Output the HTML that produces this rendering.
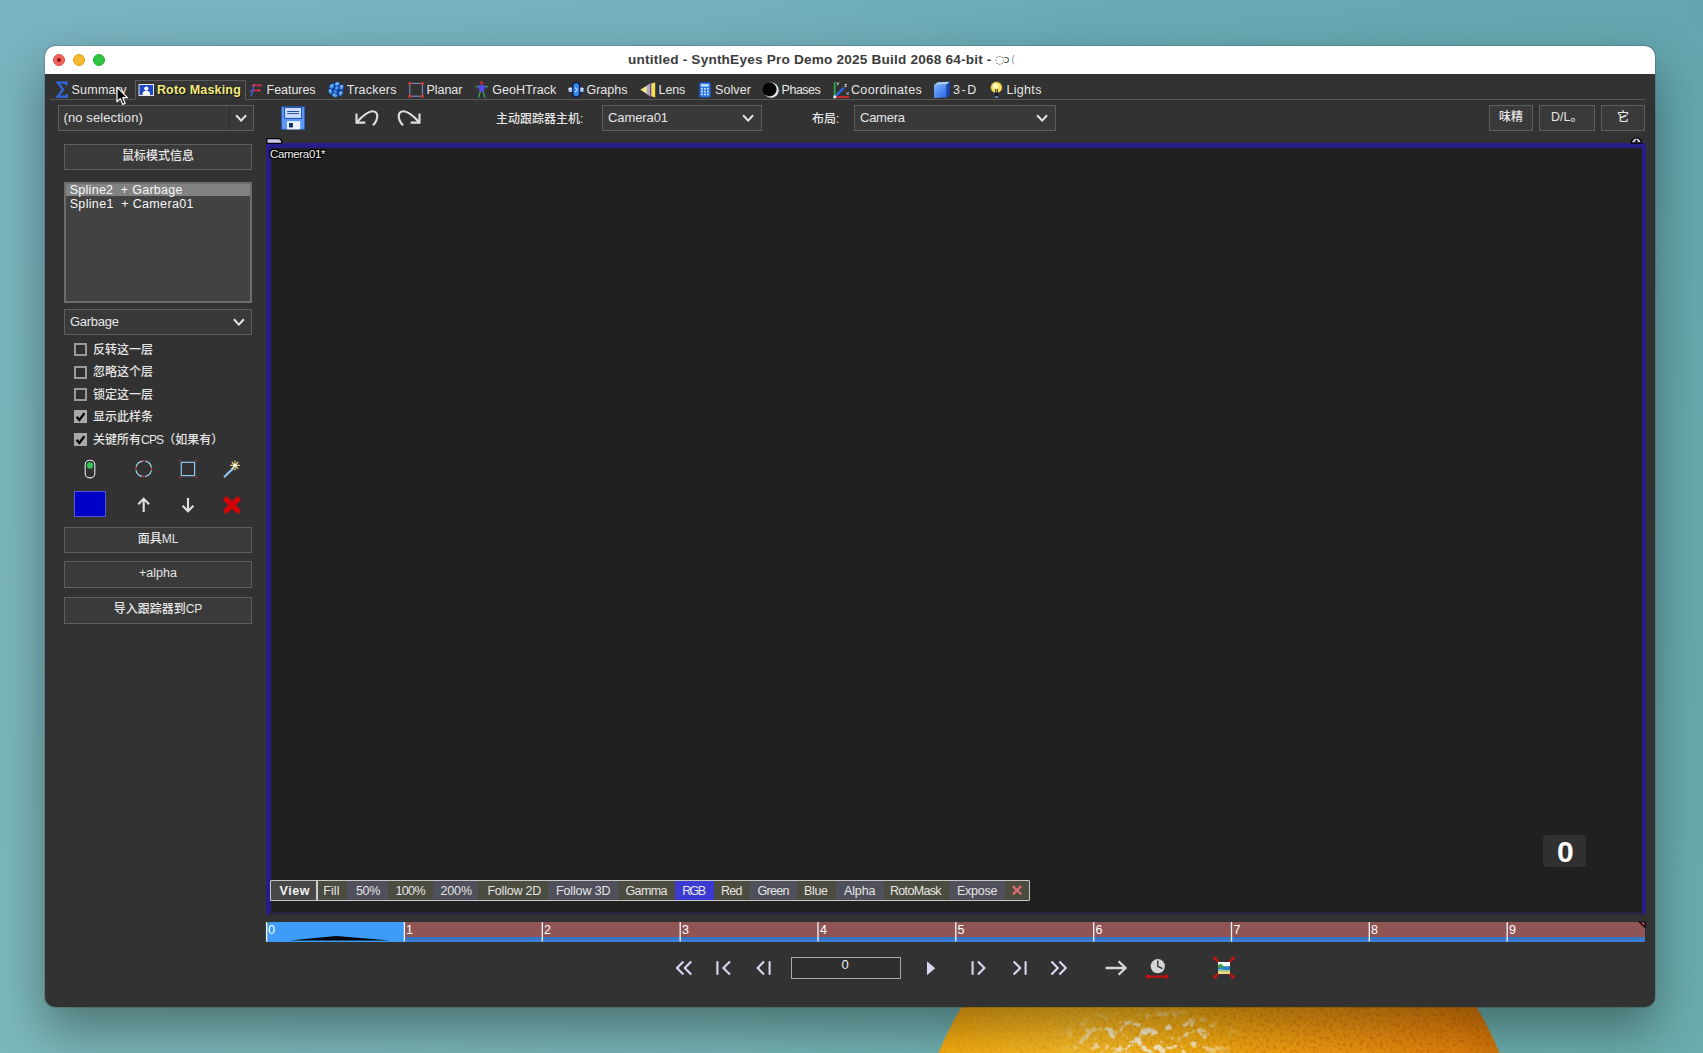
<!DOCTYPE html>
<html lang="zh">
<head>
<meta charset="utf-8">
<title>untitled - SynthEyes Pro Demo 2025 Build 2068 64-bit</title>
<style>
html,body{margin:0;padding:0;}
body{width:1703px;height:1053px;overflow:hidden;position:relative;background:#77b1be;
 font-family:"Liberation Sans","Noto Sans CJK SC",sans-serif;font-size:12.5px;color:#e6e6e6;}
.abs{position:absolute;}
#bg{left:0;top:0;width:1703px;height:1053px;}
#win{left:45px;top:46px;width:1610px;height:961px;border-radius:10px;background:#323232;
 box-shadow:0 22px 50px rgba(0,0,0,.38),0 0 0 1px rgba(0,0,0,.12);overflow:hidden;}
#in{left:-45px;top:-46px;width:1703px;height:1053px;}
#title{left:45px;top:46px;width:1610px;height:28px;background:#ffffff;}
.tl{position:absolute;top:54px;width:12px;height:12px;border-radius:50%;box-sizing:border-box;}
.lbl{position:absolute;white-space:nowrap;}
.box{position:absolute;box-sizing:border-box;border:1px solid #5e5e5e;background:#393939;}
.btn{font-weight:500;position:absolute;box-sizing:border-box;border:1px solid #5e5e5e;background:#3a3a3a;text-align:center;white-space:nowrap;font-size:12px;color:#e6e6e6;}
.cb{position:absolute;left:74px;width:13px;height:13px;box-sizing:border-box;border:2px solid #9a9a9a;background:#303030;}
.cb.on{background:#a9a9a9;border-color:#a9a9a9;}
.cbl{font-weight:500;position:absolute;left:93px;font-size:12px;line-height:16px;white-space:nowrap;color:#e6e6e6;}
svg{position:absolute;overflow:visible;}
.vc{position:absolute;top:880.5px;height:19px;}
</style>
</head>
<body>
<svg id="bg" width="1703" height="1053" viewBox="0 0 1703 1053">
 <defs>
  <linearGradient id="g1" x1="0" y1="0" x2="1" y2="0">
   <stop offset="0" stop-color="#79b4c0"/><stop offset="0.4" stop-color="#75b1bd"/><stop offset="0.62" stop-color="#69abb5"/><stop offset="1" stop-color="#63a6af"/>
  </linearGradient>
  <linearGradient id="g2" x1="0" y1="0" x2="0" y2="1">
   <stop offset="0" stop-color="#8bcea2" stop-opacity="0"/><stop offset="1" stop-color="#86c89e" stop-opacity=".2"/>
  </linearGradient>
  <radialGradient id="og" cx="1080" cy="1060" r="440" gradientUnits="userSpaceOnUse">
   <stop offset="0" stop-color="#fdc12a"/><stop offset="0.3" stop-color="#f9b012"/><stop offset="0.6" stop-color="#f39912"/><stop offset="0.85" stop-color="#e6860c"/><stop offset="1" stop-color="#cf7208"/>
  </radialGradient>
  <linearGradient id="dmg" x1="940" y1="0" x2="1500" y2="0" gradientUnits="userSpaceOnUse"><stop offset="0" stop-color="#fff" stop-opacity=".15"/><stop offset=".45" stop-color="#fff" stop-opacity=".5"/><stop offset="1" stop-color="#fff" stop-opacity="1"/></linearGradient>
  <mask id="dmk"><rect x="900" y="990" width="640" height="70" fill="url(#dmg)"/></mask>
  <clipPath id="oc"><circle cx="1219" cy="1165" r="302"/></clipPath>
  <filter id="dim" x="0" y="0" width="100%" height="100%" color-interpolation-filters="sRGB">
   <feTurbulence type="fractalNoise" baseFrequency="0.3" numOctaves="1" seed="7" result="n"/>
   <feColorMatrix in="n" type="matrix" values="0 0 0 0 0.80  0 0 0 0 0.38  0 0 0 0 0.02  5 0 0 0 -2.45"/>
  </filter>
  <filter id="spk" x="0" y="0" width="100%" height="100%" color-interpolation-filters="sRGB">
   <feTurbulence type="fractalNoise" baseFrequency="0.11" numOctaves="3" seed="11" result="n"/>
   <feColorMatrix in="n" type="matrix" values="0 0 0 0 1  0 0 0 0 0.97  0 0 0 0 0.86  7 0 0 0 -3.75"/>
  </filter>
  <radialGradient id="hm" cx="1150" cy="1040" r="1" gradientUnits="userSpaceOnUse" gradientTransform="translate(1150 1040) scale(95 34) translate(-1150 -1040)">
   <stop offset="0" stop-color="#fff"/><stop offset=".55" stop-color="#fff" stop-opacity=".8"/><stop offset="1" stop-color="#fff" stop-opacity="0"/>
  </radialGradient>
  <mask id="hmk"><rect x="900" y="990" width="700" height="70" fill="#000"/><ellipse cx="1150" cy="1040" rx="95" ry="34" fill="url(#hm)"/></mask>
 </defs>
 <rect width="1703" height="1053" fill="url(#g1)"/>
 <rect width="1703" height="1053" fill="url(#g2)"/>
 <g clip-path="url(#oc)">
  <rect x="900" y="990" width="640" height="70" fill="url(#og)"/>
  <g mask="url(#dmk)"><rect x="900" y="990" width="640" height="70" filter="url(#dim)" opacity=".5"/></g>
  <g mask="url(#hmk)"><rect x="900" y="990" width="640" height="70" filter="url(#spk)"/></g>
 </g>
</svg>
<div id="win" class="abs"><div id="in" class="abs">
 <div id="title" class="abs"></div>
 <div class="tl" style="left:53px;background:#f2655c;border:.5px solid #dd4a42;"></div>
 <div class="tl" style="left:57px;top:58px;width:4px;height:4px;background:#8c0a06;border:0;"></div>
 <div class="tl" style="left:73px;background:#f6b82e;border:.5px solid #dea123;"></div>
 <div class="tl" style="left:93px;background:#2ec341;border:.5px solid #23ab34;"></div>
 <span class="lbl" style="left:995px;top:52px;font-family:'DejaVu Sans',sans-serif;font-size:11px;line-height:16px;color:#444;letter-spacing:-1px">&#9676;&#8580;&#8201;<span style="color:#999">&#8201;(</span></span>
 <!-- tab strip -->
 <div class="abs" style="left:50px;top:99px;width:1595px;height:1px;background:#585858;"></div>
 <div class="abs" style="left:135px;top:80px;width:111px;height:20px;box-sizing:border-box;border:1px solid #5a5a5a;border-bottom:1px solid #323232;background:#353535;"></div>
 <svg width="1703" height="110" style="left:0;top:0" viewBox="0 0 1703 110">
  <!-- sigma -->
  <path d="M66.5 85.4V82.7H57.8l5.3 6.9L57.6 96.6h9.1V93.9" fill="none" stroke="#2f68dc" stroke-width="2.3" stroke-linejoin="miter"/>
  <!-- roto -->
  <rect x="139" y="84.5" width="14.5" height="11" fill="#1d48c8" stroke="#e8e8f4" stroke-width="1"/>
  <circle cx="146.3" cy="88.6" r="2.1" fill="#fff"/><path d="M142.6 95v-1.6c0-1.7 1.6-2.6 3.7-2.6s3.7.9 3.7 2.6V95z" fill="#fff"/>
  <!-- features -->
  <path d="M251.2 96.4L253.9 84" stroke="#3f5fd0" stroke-width="1.5" fill="none"/>
  <path d="M249.6 90.6h4.4" stroke="#3f5fd0" stroke-width="1.2" fill="none"/>
  <path d="M253.2 85.4H262M253 90.4H260" stroke="#cc2c4c" stroke-width="1.7" fill="none"/>
  <circle cx="253.8" cy="85.2" r="1.2" fill="#d83a5a"/><circle cx="259.2" cy="90.4" r="1.2" fill="#d83a5a"/>
  <!-- trackers -->
  <circle cx="336" cy="89.6" r="7.4" fill="#113f98"/>
  <g fill="#4a98f0">
   <ellipse cx="331.8" cy="86.2" rx="2.6" ry="1.9" transform="rotate(-40 331.8 86.2)"/><ellipse cx="337.2" cy="83.9" rx="2.5" ry="1.8" transform="rotate(-20 337.2 83.9)"/>
   <ellipse cx="341.6" cy="87.2" rx="1.8" ry="2.5" transform="rotate(20 341.6 87.2)"/><ellipse cx="340.8" cy="93.4" rx="2.4" ry="1.8" transform="rotate(-50 340.8 93.4)"/>
   <ellipse cx="334.8" cy="95.2" rx="2.6" ry="1.8" transform="rotate(15 334.8 95.2)"/><ellipse cx="330.4" cy="91.4" rx="1.8" ry="2.4" transform="rotate(-10 330.4 91.4)"/>
   <ellipse cx="336.8" cy="88" rx="2" ry="1.5" transform="rotate(-30 336.8 88)"/><ellipse cx="335.4" cy="91.6" rx="1.8" ry="1.3" transform="rotate(20 335.4 91.6)"/>
  </g>
  <g fill="#cfe4ff"><circle cx="331.2" cy="85.6" r=".7"/><circle cx="336.6" cy="83.4" r=".7"/><circle cx="341.2" cy="86.2" r=".7"/><circle cx="340.2" cy="92.8" r=".7"/><circle cx="334" cy="94.8" r=".7"/><circle cx="330" cy="90.4" r=".7"/></g>
  <!-- planar -->
  <rect x="409.8" y="83.4" width="12.6" height="12.8" fill="none" stroke="#8394d6" stroke-width="1"/>
  <g fill="#cc3434"><circle cx="409.8" cy="83.4" r="1.7"/><circle cx="422.4" cy="83.4" r="1.7"/><circle cx="409.8" cy="96.2" r="1.7"/><circle cx="422.4" cy="96.2" r="1.7"/></g>
  <!-- geohtrack -->
  <path d="M475.4 86.6h12.8" stroke="#35a862" stroke-width="1.1"/>
  <path d="M480.4 91l-1.8 6.6M483 91l1.8 6.6" stroke="#3aa85a" stroke-width="1.3" fill="none"/>
  <path d="M477.8 85.2h7.8l-2.2 6.8h-3.4z" fill="#5648ea"/>
  <circle cx="481.7" cy="83" r="1.7" fill="#c4263a"/>
  <!-- graphs -->
  <rect x="568.4" y="87.8" width="15.2" height="4.2" rx="1" fill="#9cc0f4"/>
  <rect x="568.4" y="87.8" width="15.2" height="1.6" rx=".8" fill="#d4e4fb"/>
  <rect x="572.8" y="82.6" width="6.8" height="14.2" rx="3.2" fill="#348af2" stroke="#06194a" stroke-width="1.3"/>
  <path d="M574.9 87.5l2.6 2.3-2.6 2.3" fill="none" stroke="#e8f0ff" stroke-width="1"/>
  <!-- lens -->
  <path d="M640.3 89.8L650.4 83.4v12.8z" fill="#ece488"/>
  <path d="M647 85.6l3.4-2.2v12.8l-3.4-2.2z" fill="#aaa2d2"/>
  <path d="M650.6 82.6v14.6" stroke="#7a2fb0" stroke-width="1"/>
  <path d="M651.2 83.6l4-1.2v15l-4-1.2z" fill="#f0e24a"/>
  <!-- solver -->
  <rect x="699.5" y="82.6" width="10.8" height="14.6" rx="1" fill="#2e78ea" stroke="#1a4fb0" stroke-width=".8"/>
  <rect x="701" y="84" width="7.8" height="2.6" fill="#bcd8fa"/>
  <g fill="#cfe2fb"><rect x="701" y="88" width="1.8" height="1.6"/><rect x="704" y="88" width="1.8" height="1.6"/><rect x="707" y="88" width="1.8" height="1.6"/>
   <rect x="701" y="90.8" width="1.8" height="1.6"/><rect x="704" y="90.8" width="1.8" height="1.6"/><rect x="707" y="90.8" width="1.8" height="1.6"/>
   <rect x="701" y="93.6" width="1.8" height="1.6"/><rect x="704" y="93.6" width="1.8" height="1.6"/><rect x="707" y="93.6" width="1.8" height="1.6"/></g>
  <!-- phases -->
  <circle cx="771.2" cy="90.2" r="7.6" fill="#e8e8e8"/>
  <circle cx="769.6" cy="89.4" r="7" fill="#050505"/>
  <!-- coordinates -->
  <path d="M834.7 82.2v14" stroke="#2f9e4c" stroke-width="2"/>
  <path d="M835 97h14" stroke="#c42a2a" stroke-width="2.2"/>
  <path d="M836 95.6L843.6 88" stroke="#2a66d4" stroke-width="2.6"/>
  <rect x="833.4" y="95.6" width="2.7" height="2.7" fill="#fff"/>
  <path d="M836.6 82.4l1.2 1.5 1.2-1.5M837.8 83.9v1.5M844.6 84.4h2l-2 2.2h2M846.6 92.4l2.2 2.2M848.8 92.4l-2.2 2.2" stroke="#f4f4f4" stroke-width=".8" fill="none"/>
  <!-- 3-D -->
  <defs><linearGradient id="cb" x1="0" y1="0" x2="1" y2="1"><stop offset="0" stop-color="#7eb2fb"/><stop offset="1" stop-color="#2866e6"/></linearGradient></defs>
  <path d="M934 85l12.6-.4v13l-12.6.4z" fill="url(#cb)"/>
  <path d="M934 85l3.6-2.8 12.4-.4-3.4 2.8z" fill="#a8ccfc"/>
  <path d="M946.6 84.6l3.4-2.8v12.6l-3.4 3.2z" fill="#1646b0"/>
  <!-- lights -->
  <circle cx="996.4" cy="87.4" r="5.5" fill="#f4e368" stroke="#c4aa28" stroke-width=".7"/>
  <circle cx="995.6" cy="86" r="2.6" fill="#fff9c4"/>
  <path d="M995.6 89v5M997.4 89v5" stroke="#1a1a1a" stroke-width=".9"/>
  <rect x="994.9" y="92.4" width="3.2" height="4.2" fill="#161c3a"/>
  <rect x="994.9" y="96.4" width="3.2" height="1.2" fill="#8ab4f0"/>
 </svg>

 <!-- toolbar -->
 <div class="box" style="left:58px;top:105px;width:196px;height:26px;"></div>
 <div class="abs" style="left:229px;top:106px;width:1px;height:24px;background:#2c2c2c;"></div>
 <div class="box" style="left:602px;top:105px;width:160px;height:26px;"></div>
 <div class="box" style="left:854px;top:105px;width:202px;height:26px;"></div>
 <div class="btn" style="left:1489px;top:105px;width:44px;height:26px;line-height:22px;">味精</div>
 <div class="btn" style="left:1539px;top:105px;width:56px;height:26px;line-height:22px;font-size:12.5px;">D/L。</div>
 <div class="btn" style="left:1601px;top:105px;width:44px;height:26px;line-height:22px;">它</div>
 <svg width="1703" height="140" style="left:0;top:0" viewBox="0 0 1703 140">
  <g fill="none" stroke="#e6e6e6" stroke-width="2" stroke-linecap="square" stroke-linejoin="miter">
   <path d="M236.8 116l4.3 4.6 4.3-4.6"/><path d="M743.8 116l4.3 4.6 4.3-4.6"/><path d="M1037.8 116l4.3 4.6 4.3-4.6"/>
  </g>
  <!-- save -->
  <path d="M281.6 106.8h23v22.6h-23z" fill="#5a9af4" stroke="#2458c0" stroke-width=".7"/>
  <rect x="284.6" y="107.4" width="17" height="11" fill="#ccdcfc" stroke="#1f4eae" stroke-width="1"/>
  <path d="M287.2 111.5h11.8M287.2 113.6h11.8" stroke="#2a4f9c" stroke-width="1"/>
  <rect x="287" y="121.2" width="13.2" height="8.2" fill="#eef2fc"/>
  <rect x="289" y="123" width="3.9" height="4.4" fill="#0c2a6a"/>
  <!-- undo / redo -->
  <g fill="none" stroke="#e0e0e0" stroke-width="2.1" stroke-linecap="butt" stroke-linejoin="miter">
   <path d="M357 122C361.5 117 367 111.6 372.4 111.2C378.6 110.9 379 119 373 125.4"/><path d="M356.5 113.4V122.6H365.2"/>
   <path d="M419 122C414.5 117 409 111.6 403.6 111.2C397.4 110.9 397 119 403 125.4"/><path d="M419.5 113.4V122.6H410.8"/>
  </g>
 </svg>
 <!-- left panel -->
 <div class="btn" style="left:64px;top:144px;width:188px;height:26px;line-height:23px;">鼠标模式信息</div>
 <div class="abs" style="left:64px;top:182px;width:188px;height:121px;box-sizing:border-box;border:2px solid #6c6c6c;background:#424242;"></div>
 <div class="abs" style="left:66px;top:184px;width:184px;height:12px;background:#828282;"></div>
 <div class="box" style="left:64px;top:309px;width:188px;height:26px;"></div>
 <svg width="300" height="30" style="left:0;top:309px" viewBox="0 309 300 30"><path d="M234.6 320l4.3 4.6 4.3-4.6" fill="none" stroke="#e6e6e6" stroke-width="2" stroke-linecap="square"/></svg>
 <div class="cb" style="top:343px"></div><div class="cbl" style="top:341.5px">反转这一层</div>
 <div class="cb" style="top:365.5px"></div><div class="cbl" style="top:364px">忽略这个层</div>
 <div class="cb" style="top:388px"></div><div class="cbl" style="top:386.5px">锁定这一层</div>
 <div class="cb on" style="top:410px"></div><div class="cbl" style="top:408.5px">显示此样条</div>
 <div class="cb on" style="top:433px"></div><div class="cbl" style="top:431.5px">关键所有<span style="letter-spacing:-.8px">CPS</span>（如果有）</div>
 <svg width="300" height="110" style="left:0;top:420px" viewBox="0 420 300 110">
  <path d="M76.6 417.5l2.8 3 5-6.6M76.6 440.5l2.8 3 5-6.6" transform="translate(0,-.6)" fill="none" stroke="#0a0a0a" stroke-width="2.4"/>
  <!-- toggle -->
  <rect x="85.2" y="460.3" width="9.6" height="17.6" rx="4.4" fill="none" stroke="#e6e6e6" stroke-width="1.1"/>
  <circle cx="90" cy="465.4" r="3.1" fill="#2fc757"/>
  <!-- circle -->
  <circle cx="143.7" cy="468.8" r="7.8" fill="none" stroke="#9fd2f2" stroke-width="1.2" stroke-dasharray="9.25 3" stroke-dashoffset="-1.5"/>
  <g fill="#e02855"><circle cx="143.7" cy="461" r="1"/><circle cx="143.7" cy="476.6" r="1"/><circle cx="135.9" cy="468.8" r="1"/><circle cx="151.5" cy="468.8" r="1"/></g>
  <!-- square -->
  <rect x="181.3" y="462.3" width="13.3" height="13.3" fill="none" stroke="#8ec6f2" stroke-width="1.2"/>
  <g fill="#d02a2a"><circle cx="179.7" cy="460.6" r=".9"/><circle cx="196.2" cy="460.6" r=".9"/><circle cx="179.7" cy="477.3" r=".9"/><circle cx="196.2" cy="477.3" r=".9"/></g>
  <!-- wand -->
  <path d="M224 477.3l9.6-9.4" stroke="#8cc0f0" stroke-width="2.2" fill="none"/>
  <path d="M235 460.6v9.6M230.3 465.4h9.4M231.7 462l6.6 6.8M238.3 462l-6.6 6.8" stroke="#f6e08a" stroke-width="1.1" fill="none"/>
  <circle cx="235" cy="465.4" r="1.5" fill="#fff"/>
  <!-- swatch -->
  <rect x="74.5" y="491.5" width="31" height="25" fill="#0000c6" stroke="#5656d2" stroke-width="1"/>
  <!-- arrows -->
  <g fill="none" stroke="#e0e0e0" stroke-width="2.1"><path d="M143.7 512v-13M138.3 504.2l5.4-5.4 5.4 5.4"/><path d="M188 498v13M182.6 505.8l5.4 5.4 5.4-5.4"/></g>
  <path d="M226.3 499.3l11.4 11.4M237.7 499.3l-11.4 11.4" stroke="#d20404" stroke-width="5.4" stroke-linecap="round" fill="none"/>
 </svg>
 <div class="btn" style="left:64px;top:527px;width:188px;height:26px;line-height:23px;">面具ML</div>
 <div class="btn" style="left:64px;top:561px;width:188px;height:27px;line-height:22px;font-size:12.5px;">+alpha</div>
 <div class="btn" style="left:64px;top:597px;width:188px;height:27px;line-height:22.5px;">导入跟踪器到CP</div>
 <!-- viewport -->
 <div class="abs" style="left:266px;top:143px;width:1380px;height:772px;box-sizing:border-box;background:#202020;border-left:5px solid #271d89;border-top:5px solid #271d89;border-right:4px solid #271d89;border-bottom:3px solid #292740;"></div>
 <svg width="1703" height="20" style="left:0;top:130px" viewBox="0 130 1703 20">
  <path d="M266.9 143.4v-4.7h11c2.6 0 4 2 4 4.7z" fill="#c9c9ee" stroke="#000" stroke-width="1.2"/>
  <path d="M1631.3 143a5.1 5.1 0 0 1 10.2 0z" fill="#d4d4ee" stroke="#000" stroke-width="1.4"/>
  <path d="M1636.4 139.6v3.4M1634.6 141.3h3.6" stroke="#000" stroke-width="1.1"/>
 </svg>
 <div class="abs" style="left:1543px;top:835px;width:43px;height:32px;border-radius:4px;background:#303030;"></div>
 <!-- view bar -->
 <div class="abs" style="left:270px;top:879.5px;width:760px;height:21px;box-sizing:border-box;border:1px solid #c6c6c6;background:#4b4b3f;border-radius:1px;"></div>
 <div class="vc" style="left:271px;width:45px;background:#474747;"></div>
 <div class="vc" style="left:316px;width:1.5px;background:#d0d0d0;"></div>
 <div class="vc" style="left:347px;width:41px;background:#50505c;"></div>
 <div class="vc" style="left:433px;width:45px;background:#50505c;"></div>
 <div class="vc" style="left:548px;width:70px;background:#50505c;"></div>
 <div class="vc" style="left:675px;width:39px;background:#3b3bd2;"></div>
 <div class="vc" style="left:750px;width:47px;background:#50505c;"></div>
 <div class="vc" style="left:836px;width:48px;background:#50505c;"></div>
 <div class="vc" style="left:950px;width:55px;background:#50505c;"></div>
 <svg width="30" height="21" style="left:1005px;top:880px" viewBox="1005 880 30 21"><path d="M1012.8 886.2l8.4 8.2M1021.2 886.2l-8.4 8.2" stroke="#d86a6a" stroke-width="2.4" fill="none"/></svg>
 <!-- timeline -->
 <div class="abs" style="left:266px;top:922px;width:1379px;height:15px;background:#8f5454;"></div>
 <div class="abs" style="left:266px;top:937px;width:1379px;height:5px;background:linear-gradient(#3570c4,#3e82d6);"></div>
 <div class="abs" style="left:266px;top:922px;width:138px;height:19.5px;background:#3c9cf8;"></div>
 <svg width="1703" height="30" style="left:0;top:915px" viewBox="0 915 1703 30">
  <path d="M290 940.4l46-4.4 54 4.4z" fill="#000"/>
  <path d="M266 922h3.4l-3.4 3.4z" fill="#123"/><path d="M266.4 924.4l2.2-2.2" stroke="#59c83a" stroke-width="1"/>
  <path d="M1645 922v5.4l-5.6-5.4z" fill="#e0506a" stroke="#000" stroke-width="1.2"/>
  <g stroke="#f4f4f4" stroke-width="1.3"><path d="M266.6 922v19.5M404.4 922v19.5M542.3 922v19.5M680.2 922v19.5M818 922v19.5M955.8 922v19.5M1093.7 922v19.5M1231.5 922v19.5M1369.3 922v19.5M1507.2 922v19.5"/></g>
 </svg>
 <!-- transport -->
 <div class="abs" style="left:791px;top:957px;width:110px;height:22px;box-sizing:border-box;border:1px solid #a8a8a8;background:#2e2e2e;"></div>
 <svg width="1703" height="40" style="left:0;top:950px" viewBox="0 950 1703 40">
  <g fill="none" stroke="#d8d8f2" stroke-width="2.1" stroke-linejoin="miter">
   <path d="M683.4 961.4l-6.4 6.6 6.4 6.6M691.2 961.4l-6.4 6.6 6.4 6.6"/>
   <path d="M717.4 961.2v13.6M730 961.4l-6.6 6.6 6.6 6.6"/>
   <path d="M769.6 961.2v13.6M764 961.4l-6.4 6.6 6.4 6.6"/>
   <path d="M972.6 961.2v13.6M978 961.4l6.4 6.6-6.4 6.6"/>
   <path d="M1025.6 961.2v13.6M1013.6 961.4l6.6 6.6-6.6 6.6"/>
   <path d="M1051.4 961.4l6.4 6.6-6.4 6.6M1059.4 961.4l6.4 6.6-6.4 6.6"/>
  </g>
  <path d="M927 961.2l8.2 7-8.2 7z" fill="#d6d6f0"/>
  <path d="M1105.6 968h20M1118.6 961.2l7 6.8-7 6.8" fill="none" stroke="#d8d8d8" stroke-width="2.3"/>
  <circle cx="1157.8" cy="966.2" r="7.1" fill="#d4d4d4"/>
  <path d="M1157.8 960.4v6l4.6 2.2" fill="none" stroke="#2a2a2a" stroke-width="1.3"/>
  <path d="M1147.4 976.6h19.6" stroke="#c01010" stroke-width="2.2"/><circle cx="1147.8" cy="976.6" r="2.2" fill="#c01010"/><circle cx="1166.6" cy="976.6" r="2.2" fill="#c01010"/>
  <path d="M1215 958.4l4 4M1233 958.4l-4 4M1215 977l4-4M1233 977l-4-4" stroke="#bc1414" stroke-width="2.1"/>
  <g fill="#bc1414"><circle cx="1215" cy="958.4" r="1.9"/><circle cx="1233" cy="958.4" r="1.9"/><circle cx="1215" cy="977" r="1.9"/><circle cx="1233" cy="977" r="1.9"/></g>
  <rect x="1218" y="962" width="12" height="12" fill="#f6f8fb"/>
  <path d="M1218 966.4c3-.6 6 .4 12-.4v5.400h-12z" fill="#2f7fc4"/>
  <path d="M1218 965.200l2.600-1.600 4 3.400-6.600 1z" fill="#3fa24a"/>
  <path d="M1218 969.600c4-1 8 1.400 12 .2v4.200h-12z" fill="#8cc8a8"/>
  <rect x="1218" y="971.400" width="12" height="2.600" fill="#ecd878"/>
 </svg>

<!--LEFT-->
<!--VIEWPORT-->
<!--VIEWBAR-->
<!--TIMELINE-->
<!--TRANSPORT-->
<span class="lbl" style="left:628px;top:51.0px;font-size:13.6px;line-height:18px;color:#3c3c3c;font-weight:bold;letter-spacing:0.20px;">untitled - SynthEyes Pro Demo 2025 Build 2068 64-bit -</span>
<span class="lbl" style="left:71.4px;top:81.8px;font-size:12.5px;line-height:16px;color:#e6e6e6;letter-spacing:0.27px;">Summary</span>
<span class="lbl" style="left:156.9px;top:81.8px;font-size:12.5px;line-height:16px;color:#f4ea7c;font-weight:bold;letter-spacing:0.18px;text-shadow:1px 1px 0 #111;">Roto Masking</span>
<span class="lbl" style="left:266.6px;top:81.8px;font-size:12.5px;line-height:16px;color:#e6e6e6;letter-spacing:-0.05px;">Features</span>
<span class="lbl" style="left:346.8px;top:81.8px;font-size:12.5px;line-height:16px;color:#e6e6e6;letter-spacing:0.21px;">Trackers</span>
<span class="lbl" style="left:426.6px;top:81.8px;font-size:12.5px;line-height:16px;color:#e6e6e6;letter-spacing:-0.07px;">Planar</span>
<span class="lbl" style="left:492.3px;top:81.8px;font-size:12.5px;line-height:16px;color:#e6e6e6;letter-spacing:0.06px;">GeoHTrack</span>
<span class="lbl" style="left:586.4px;top:81.8px;font-size:12.5px;line-height:16px;color:#e6e6e6;letter-spacing:0.04px;">Graphs</span>
<span class="lbl" style="left:658.6px;top:81.8px;font-size:12.5px;line-height:16px;color:#e6e6e6;letter-spacing:-0.17px;">Lens</span>
<span class="lbl" style="left:715px;top:81.8px;font-size:12.5px;line-height:16px;color:#e6e6e6;letter-spacing:0.09px;">Solver</span>
<span class="lbl" style="left:781.6px;top:81.8px;font-size:12.5px;line-height:16px;color:#e6e6e6;letter-spacing:-0.50px;">Phases</span>
<span class="lbl" style="left:851px;top:81.8px;font-size:12.5px;line-height:16px;color:#e6e6e6;letter-spacing:0.33px;">Coordinates</span>
<span class="lbl" style="left:952.9px;top:81.8px;font-size:12.5px;line-height:16px;color:#e6e6e6;letter-spacing:1.62px;">3-D</span>
<span class="lbl" style="left:1006.4px;top:81.8px;font-size:12.5px;line-height:16px;color:#e6e6e6;letter-spacing:0.33px;">Lights</span>
<span class="lbl" style="left:63.5px;top:109.3px;font-size:13px;line-height:17px;color:#e6e6e6;letter-spacing:0.10px;">(no selection)</span>
<span class="lbl" style="left:496px;top:110.5px;font-size:12px;line-height:16px;color:#e6e6e6;font-weight:500;">主动跟踪器主机:</span>
<span class="lbl" style="left:608px;top:109.3px;font-size:13px;line-height:17px;color:#e6e6e6;letter-spacing:-0.10px;">Camera01</span>
<span class="lbl" style="left:812px;top:110.5px;font-size:12px;line-height:16px;color:#e6e6e6;font-weight:500;">布局:</span>
<span class="lbl" style="left:860px;top:109.3px;font-size:13px;line-height:17px;color:#e6e6e6;letter-spacing:-0.25px;">Camera</span>
<span class="lbl" style="left:69.7px;top:181.8px;font-size:12.5px;line-height:16px;color:#f6f6f6;letter-spacing:0.28px;white-space:pre;">Spline2  + Garbage</span>
<span class="lbl" style="left:69.7px;top:195.8px;font-size:12.5px;line-height:16px;color:#f6f6f6;letter-spacing:0.33px;white-space:pre;">Spline1  + Camera01</span>
<span class="lbl" style="left:70px;top:313.3px;font-size:13px;line-height:17px;color:#e6e6e6;letter-spacing:-0.27px;">Garbage</span>
<span class="lbl" style="left:270px;top:146.7px;font-size:11.5px;line-height:15px;color:#f2f2f2;letter-spacing:-0.33px;text-shadow:0 0 2px #000,1px 1px 0 #000,-1px -1px 0 #000,1px -1px 0 #000,-1px 1px 0 #000;">Camera01*</span>
<span class="lbl" style="left:323.2px;top:882.6px;font-size:12.5px;line-height:16px;color:#e4e4e4;letter-spacing:0.11px;">Fill</span>
<span class="lbl" style="left:355.9px;top:882.6px;font-size:12.5px;line-height:16px;color:#e4e4e4;letter-spacing:-0.27px;">50%</span>
<span class="lbl" style="left:395.5px;top:882.6px;font-size:12.5px;line-height:16px;color:#e4e4e4;letter-spacing:-0.66px;">100%</span>
<span class="lbl" style="left:440.5px;top:882.6px;font-size:12.5px;line-height:16px;color:#e4e4e4;letter-spacing:-0.16px;">200%</span>
<span class="lbl" style="left:487.4px;top:882.6px;font-size:12.5px;line-height:16px;color:#e4e4e4;letter-spacing:-0.21px;">Follow 2D</span>
<span class="lbl" style="left:556px;top:882.6px;font-size:12.5px;line-height:16px;color:#e4e4e4;letter-spacing:-0.13px;">Follow 3D</span>
<span class="lbl" style="left:625.5px;top:882.6px;font-size:12.5px;line-height:16px;color:#e4e4e4;letter-spacing:-0.61px;">Gamma</span>
<span class="lbl" style="left:682.3px;top:882.6px;font-size:12.5px;line-height:16px;color:#e4e4e4;letter-spacing:-1.70px;">RGB</span>
<span class="lbl" style="left:721px;top:882.6px;font-size:12.5px;line-height:16px;color:#e4e4e4;letter-spacing:-0.72px;">Red</span>
<span class="lbl" style="left:757.5px;top:882.6px;font-size:12.5px;line-height:16px;color:#e4e4e4;letter-spacing:-0.69px;">Green</span>
<span class="lbl" style="left:804px;top:882.6px;font-size:12.5px;line-height:16px;color:#e4e4e4;letter-spacing:-0.34px;">Blue</span>
<span class="lbl" style="left:844px;top:882.6px;font-size:12.5px;line-height:16px;color:#e4e4e4;letter-spacing:-0.12px;">Alpha</span>
<span class="lbl" style="left:890px;top:882.6px;font-size:12.5px;line-height:16px;color:#e4e4e4;letter-spacing:-0.68px;">RotoMask</span>
<span class="lbl" style="left:957px;top:882.6px;font-size:12.5px;line-height:16px;color:#e4e4e4;letter-spacing:-0.24px;">Expose</span>
<span class="lbl" style="left:279.5px;top:882.6px;font-size:12.5px;line-height:16px;color:#f0f0f0;font-weight:bold;letter-spacing:0.58px;">View</span>
<span class="lbl" style="left:268px;top:921.8px;font-size:12.5px;line-height:16px;color:#fff;">0</span>
<span class="lbl" style="left:406px;top:921.8px;font-size:12.5px;line-height:16px;color:#fff;">1</span>
<span class="lbl" style="left:544px;top:921.8px;font-size:12.5px;line-height:16px;color:#fff;">2</span>
<span class="lbl" style="left:682px;top:921.8px;font-size:12.5px;line-height:16px;color:#fff;">3</span>
<span class="lbl" style="left:820px;top:921.8px;font-size:12.5px;line-height:16px;color:#fff;">4</span>
<span class="lbl" style="left:957.5px;top:921.8px;font-size:12.5px;line-height:16px;color:#fff;">5</span>
<span class="lbl" style="left:1095.5px;top:921.8px;font-size:12.5px;line-height:16px;color:#fff;">6</span>
<span class="lbl" style="left:1233.5px;top:921.8px;font-size:12.5px;line-height:16px;color:#fff;">7</span>
<span class="lbl" style="left:1371px;top:921.8px;font-size:12.5px;line-height:16px;color:#fff;">8</span>
<span class="lbl" style="left:1509px;top:921.8px;font-size:12.5px;line-height:16px;color:#fff;">9</span>
<span class="lbl" style="left:841.5px;top:956.3px;font-size:13px;line-height:17px;color:#f0f0f0;">0</span>
<span class="lbl" style="left:1557px;top:831.7px;font-size:30px;line-height:39px;color:#fff;font-weight:bold;">0</span>
 <svg width="20" height="26" style="left:114.2px;top:85.4px" viewBox="0 0 20 26"><path d="M3 2.2v14.6l3.3-3.2 2.5 5.8 2.4-1.1-2.5-5.6h4.7z" fill="#0a0a0a" stroke="#fff" stroke-width="1.2" stroke-linejoin="round"/></svg>

</div></div>
</body>
</html>
